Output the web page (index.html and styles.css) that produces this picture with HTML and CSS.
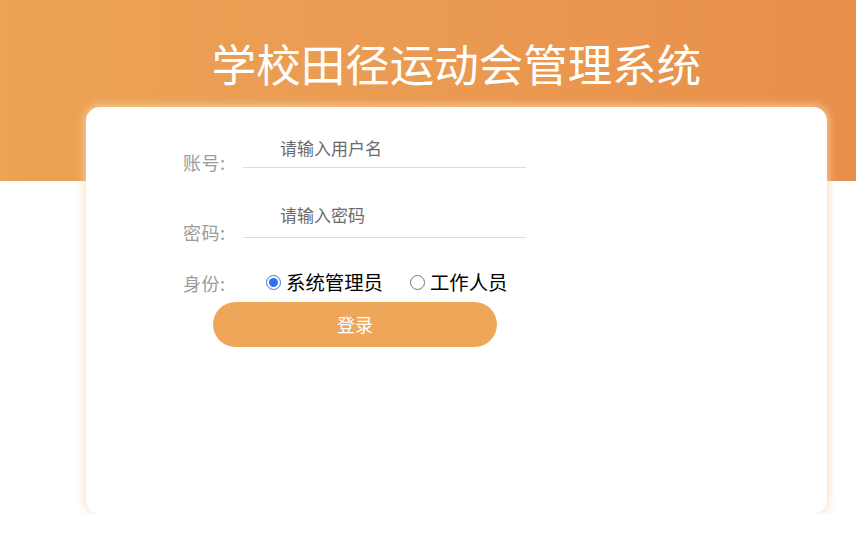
FILE: index.html
```html
<!DOCTYPE html>
<html lang="zh-CN">
<head>
<meta charset="utf-8">
<title>学校田径运动会管理系统</title>
<link rel="stylesheet" href="styles.css">
</head>
<body>
  <header class="banner">
    <h1 class="title">学校田径运动会管理系统</h1>
  </header>
  <main class="card">
    <form class="login-form">
      <div class="row row-user">
        <label class="label" for="user">账号:</label>
        <input class="field" id="user" type="text" placeholder="请输入用户名">
      </div>
      <div class="row row-pass">
        <label class="label" for="pass">密码:</label>
        <input class="field field-tall" id="pass" type="password" placeholder="请输入密码">
      </div>
      <div class="row row-role">
        <span class="label">身份:</span>
        <div class="radios">
          <label class="radio"><input type="radio" name="role" checked><span>系统管理员</span></label>
          <label class="radio"><input type="radio" name="role"><span>工作人员</span></label>
        </div>
      </div>
      <button class="submit" type="button">登录</button>
    </form>
  </main>
</body>
</html>
```

FILE: styles.css
```css
html, body {
  margin: 0;
  padding: 0;
  background: #ffffff;
  font-family: "Noto Sans CJK SC", "Noto Sans", sans-serif;
}

.banner {
  height: 181px;
  background: linear-gradient(90deg, #eca355 0%, #ea9a51 50%, #e88f4a 100%);
  box-sizing: border-box;
  padding-top: 33px;
}

.title {
  margin: 0 0 0 86px;
  width: 741px;
  text-align: center;
  font-size: 44.5px;
  line-height: 60px;
  font-weight: 400;
  color: #ffffff;
}

.card {
  position: relative;
  display: block;
  margin: -74px 0 0 86px;
  width: 741px;
  height: 407px;
  box-sizing: border-box;
  padding: 21px 0 0 97px;
  background: #ffffff;
  border-radius: 14px;
  box-shadow: 0 0 9px 2px rgba(252, 215, 172, 0.75);
}

.login-form {
  display: flex;
  flex-direction: column;
}

.row {
  display: flex;
  align-items: flex-end;
}

.label {
  width: 60px;
  flex: none;
  font-size: 18px;
  line-height: 20px;
  color: #9b9b9b;
  margin-bottom: -4px;
  letter-spacing: 0.5px;
}

.field {
  width: 283px;
  height: 40px;
  box-sizing: border-box;
  border: none;
  border-bottom: 1px solid #dedede;
  padding: 0 0 0 37px;
  margin: 0;
  outline: none;
  font-family: inherit;
  font-size: 17px;
  color: #333;
  background: transparent;
}

.field::placeholder {
  color: #6b6b6b;
}

.field-tall {
  height: 46px;
}

.row-pass {
  margin-top: 24px;
}

.row-role {
  margin-top: 32px;
  align-items: center;
  height: 24px;
}

.row-role .label {
  margin-bottom: 0;
  margin-top: 2px;
}

.radios {
  display: flex;
  align-items: center;
  gap: 27px;
  margin-left: 23px;
}

.radio {
  display: flex;
  align-items: center;
  gap: 5px;
  font-size: 19.4px;
  line-height: 24px;
  color: #000;
}

.radio input {
  width: 15px;
  height: 15px;
  margin: 0;
  accent-color: #2f73ec;
}

.submit {
  margin: 8px 0 0 30px;
  width: 284px;
  height: 45px;
  border: none;
  border-radius: 23px;
  background: #eea658;
  color: #ffffff;
  font-family: inherit;
  font-size: 18px;
  line-height: 45px;
  padding: 0;
}
```
